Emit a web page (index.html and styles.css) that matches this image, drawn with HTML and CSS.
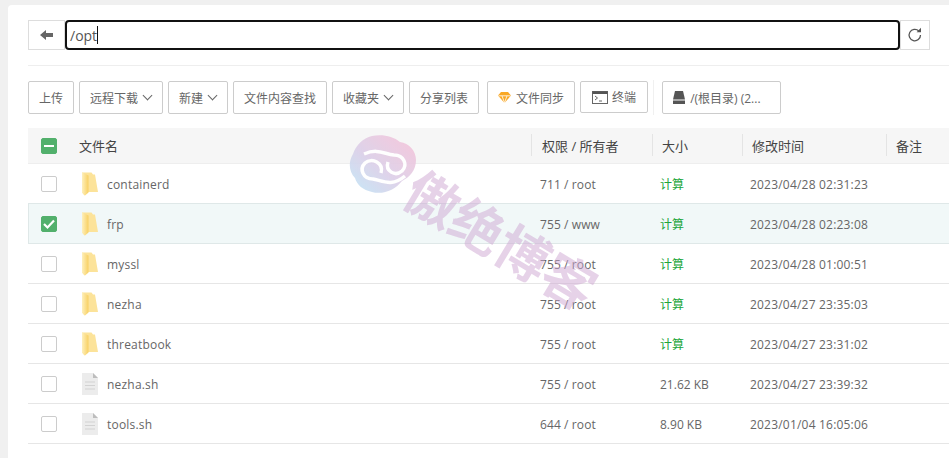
FILE: index.html
```html
<!DOCTYPE html>
<html lang="zh-CN">
<head>
  <meta charset="UTF-8">
  <title>文件管理</title>
  <link rel="stylesheet" href="styles.css">
</head>
<body>
  <svg width="0" height="0" class="defs">
    <defs>
      <linearGradient id="folderFill" x1="0" y1="0" x2="1" y2="0">
        <stop offset="0" stop-color="#fef0bd"/>
        <stop offset="1" stop-color="#f8d062"/>
      </linearGradient>
      <linearGradient id="cloudFill" x1="0" y1="1" x2="1" y2="0">
        <stop offset="0" stop-color="#bfe6f7"/>
        <stop offset="0.45" stop-color="#dccfe8"/>
        <stop offset="1" stop-color="#f8c2d8"/>
      </linearGradient>
      <symbol id="folder" viewBox="0 0 18 24">
        <path d="M1 0.500h9.500l1.500 2h2l3 17.500h-10l-3.500 3.500-2.500-3z" fill="#fce39a"/>
        <path d="M1 0.500l6.500 3v17l-3.500 3-3-3z" fill="url(#folderFill)"/>
      </symbol>
      <symbol id="file" viewBox="0 0 18 24">
        <path d="M1 1h11l5 5v17h-16z" fill="#ececec"/>
        <path d="M12 1l5 5h-5z" fill="#bdbdbd"/>
        <path d="M4 10h10M4 13.500h10M4 17h10" stroke="#d2d2d2" stroke-width="1"/>
      </symbol>
    </defs>
  </svg>

  <div class="panel">
    <div class="path-bar">
      <button class="path-btn back">
        <svg width="14" height="12" viewBox="0 0 14 12"><path d="M0 6l6-5v3h7v4h-7v3z" fill="#666"/></svg>
      </button>
      <div class="path-input">/opt<span class="caret"></span></div>
      <button class="path-btn refresh">
        <svg width="16" height="16" viewBox="0 0 16 16"><path d="M13.500 8a5.700 5.700 0 1 1-1.700-4" fill="none" stroke="#555" stroke-width="1.300"/><path d="M14 0.800v4.400h-4.400z" fill="#555"/></svg>
      </button>
    </div>

    <div class="toolbar">
      <button class="btn">上传</button>
      <button class="btn">远程下载<i class="arrow"></i></button>
      <button class="btn">新建<i class="arrow"></i></button>
      <button class="btn">文件内容查找</button>
      <button class="btn">收藏夹<i class="arrow"></i></button>
      <button class="btn">分享列表</button>
      <button class="btn sync">
        <svg width="13" height="11" viewBox="0 0 13 11"><path d="M3 0h7l3 3.500-6.500 7.500-6.500-7.500z" fill="#f9a825"/><path d="M0.500 3.800h12M4 3.800l2.500 7 2.500-7" stroke="#fff" stroke-width="0.800" fill="none"/></svg>
        文件同步
      </button>
      <button class="btn term">
        <svg width="16" height="13" viewBox="0 0 16 13"><rect x="0.500" y="0.500" width="15" height="12" fill="#fff" stroke="#666"/><rect x="0.500" y="0.500" width="15" height="2.500" fill="#555"/><path d="M3 5l2.500 2-2.500 2M7 10h3" stroke="#666" fill="none"/></svg>
        终端
      </button>
      <span class="tool-sep"></span>
      <button class="btn disk">
        <svg width="12" height="13" viewBox="0 0 12 13"><path d="M2 0h8l2 8.500h-12z" fill="#555"/><rect y="9.500" width="12" height="3.500" fill="#555"/></svg>
        /(根目录) (2...
      </button>
    </div>

    <div class="file-table">
      <div class="row head">
        <div class="cell-check"><span class="check partial"><i></i></span></div>
        <div class="cell-name">文件名</div>
        <div class="cell-perm">权限 / 所有者</div>
        <div class="cell-size">大小</div>
        <div class="cell-time">修改时间</div>
        <div class="cell-note">备注</div>
      </div>

      <div class="row">
        <div class="cell-check"><span class="check"></span></div>
        <div class="cell-name"><svg class="ficon"><use href="#folder"/></svg>containerd</div>
        <div class="cell-perm">711 / root</div>
        <div class="cell-size calc">计算</div>
        <div class="cell-time">2023/04/28 02:31:23</div>
        <div class="cell-note"></div>
      </div>
      <div class="row selected">
        <div class="cell-check"><span class="check on"><svg width="14" height="12" viewBox="0 0 14 12"><path d="M2 6l3.500 3.500 6.500-7" fill="none" stroke="#fff" stroke-width="2.200"/></svg></span></div>
        <div class="cell-name"><svg class="ficon"><use href="#folder"/></svg>frp</div>
        <div class="cell-perm">755 / www</div>
        <div class="cell-size calc">计算</div>
        <div class="cell-time">2023/04/28 02:23:08</div>
        <div class="cell-note"></div>
      </div>
      <div class="row">
        <div class="cell-check"><span class="check"></span></div>
        <div class="cell-name"><svg class="ficon"><use href="#folder"/></svg>myssl</div>
        <div class="cell-perm">755 / root</div>
        <div class="cell-size calc">计算</div>
        <div class="cell-time">2023/04/28 01:00:51</div>
        <div class="cell-note"></div>
      </div>
      <div class="row">
        <div class="cell-check"><span class="check"></span></div>
        <div class="cell-name"><svg class="ficon"><use href="#folder"/></svg>nezha</div>
        <div class="cell-perm">755 / root</div>
        <div class="cell-size calc">计算</div>
        <div class="cell-time">2023/04/27 23:35:03</div>
        <div class="cell-note"></div>
      </div>
      <div class="row">
        <div class="cell-check"><span class="check"></span></div>
        <div class="cell-name"><svg class="ficon"><use href="#folder"/></svg>threatbook</div>
        <div class="cell-perm">755 / root</div>
        <div class="cell-size calc">计算</div>
        <div class="cell-time">2023/04/27 23:31:02</div>
        <div class="cell-note"></div>
      </div>
      <div class="row">
        <div class="cell-check"><span class="check"></span></div>
        <div class="cell-name"><svg class="ficon"><use href="#file"/></svg>nezha.sh</div>
        <div class="cell-perm">755 / root</div>
        <div class="cell-size">21.62 KB</div>
        <div class="cell-time">2023/04/27 23:39:32</div>
        <div class="cell-note"></div>
      </div>
      <div class="row">
        <div class="cell-check"><span class="check"></span></div>
        <div class="cell-name"><svg class="ficon"><use href="#file"/></svg>tools.sh</div>
        <div class="cell-perm">644 / root</div>
        <div class="cell-size">8.90 KB</div>
        <div class="cell-time">2023/01/04 16:05:06</div>
        <div class="cell-note"></div>
      </div>
    </div>
  </div>

  <!-- watermark lies over the table -->
  <div class="watermark">
    <svg class="wm-logo" width="70" height="60" viewBox="0 0 70 60">
      <path d="M24 1c10-2 21 0 28 6 9 1 16 9 16 18 0 10-6 17-14 21-7 9-19 14-30 11-9-2-15-7-17-14-6-6-7-16-2-24 3-9 10-16 19-18z" fill="url(#cloudFill)"/>
      <path d="M33 38c3-10-9-16-16-10-6 6-2 16 8 16 10 2 19 8 32-3" fill="none" stroke="#fff" stroke-width="3.500"/>
      <path d="M40 27c-3 9 7 15 14 9 6-6 2-16-8-16-10-1-16-7-30-1" fill="none" stroke="#fff" stroke-width="3.500"/>
    </svg>
    <div class="wm-text">傲绝博客</div>
  </div>
</body>
</html>
```

FILE: styles.css
```css
* {
  box-sizing: border-box;
}
body {
  margin: 0;
  height: 458px;
  overflow: hidden;
  background: #f0f0f0;
  color: #666;
  font-family: "Open Sans", "Noto Sans CJK SC", sans-serif;
  font-size: 12px;
  position: relative;
}
.defs {
  position: absolute;
}
button {
  font-family: inherit;
  color: inherit;
}
.panel {
  margin: 5px 0 0 8px;
  height: 453px;
  padding: 15px 0 0 20px;
  background: #fff;
  border-radius: 4px 0 0 0;
}

/* path bar */
.path-bar {
  display: flex;
  width: 902px;
  height: 30px;
}
.path-btn {
  background: #fff;
  border: 1px solid #ddd;
  padding: 0;
  display: flex;
  align-items: center;
  justify-content: center;
}
.back {
  width: 37px;
}
.refresh {
  width: 30px;
}
.path-input {
  flex: 1;
  display: flex;
  align-items: center;
  border: 2px solid #111;
  border-radius: 4px;
  padding-left: 3px;
  font-size: 14px;
  color: #555;
}
.caret {
  width: 1px;
  height: 18px;
  background: #111;
}

/* toolbar */
.toolbar {
  display: flex;
  align-items: flex-start;
  gap: 5px;
  margin-top: 15px;
  padding-top: 15px;
  border-top: 1px solid #eee;
  height: 63px;
}
.btn {
  height: 33px;
  padding: 0 10px;
  background: #fff;
  border: 1px solid #ccc;
  border-radius: 2px;
  font-size: 12px;
  color: #666;
  display: flex;
  align-items: center;
  white-space: nowrap;
}
.btn svg {
  margin-right: 5px;
}
.arrow {
  width: 7px;
  height: 7px;
  margin: -4px 1px 0 6px;
  border-right: 1px solid #666;
  border-bottom: 1px solid #666;
  transform: rotate(45deg);
}
.sync {
  margin-left: 3px;
}
.term {
  padding: 0 11px;
  height: 32px;
}
.term svg {
  margin-right: 4px;
}
.tool-sep {
  width: 1px;
  height: 35px;
  margin: -1px 3px 0 0;
  background: #f0f0f0;
}
.disk {
  width: 119px;
}

/* file table */
.file-table {
  width: 921px;
}
.row {
  display: grid;
  grid-template-columns: 51px 452px 121px 90px 144px 63px;
  align-items: center;
  height: 40px;
  border-bottom: 1px solid #e6e6e6;
  font-size: 12px;
}
.row.head {
  height: 36px;
  background: #f6f6f6;
  border-bottom: 1px solid #eee;
  color: #444;
  font-size: 13px;
}
.row.selected {
  background: #f1f8f8;
  border-color: #dfe8e8;
  box-shadow: inset 1px 0 0 #dfe8e8, 0 -1px 0 #dfe8e8;
}
.head > div {
  position: relative;
}
.head .cell-perm::before,
.head .cell-size::before,
.head .cell-time::before,
.head .cell-note::before {
  content: "";
  position: absolute;
  left: 0;
  top: -2px;
  height: 22px;
  width: 1px;
  background: #e4e4e4;
}
.cell-check {
  padding-left: 13px;
  display: flex;
}
.cell-name {
  display: flex;
  align-items: center;
  letter-spacing: 0.200px;
  padding-top: 1px;
}
.cell-perm {
  padding: 1px 0 0 9px;
  letter-spacing: 0.100px;
}
.cell-size {
  padding: 1px 0 0 8px;
}
.cell-time {
  padding: 1px 0 0 8px;
  letter-spacing: 0.200px;
}
.row.head .cell-name,
.row.head .cell-perm,
.row.head .cell-size,
.row.head .cell-time {
  padding-top: 0;
  letter-spacing: 0;
}
.row.head .cell-perm {
  padding-left: 11px;
}
.row.head .cell-size,
.row.head .cell-time,
.row.head .cell-note {
  padding-left: 10px;
}
.calc {
  padding-top: 0;
  color: #20a53a;
}
.ficon {
  width: 18px;
  height: 24px;
  margin: 0 8px 0 2px;
  flex: none;
}
.check {
  width: 16px;
  height: 16px;
  border: 1px solid #ccc;
  border-radius: 2px;
  background: #fff;
  display: flex;
  align-items: center;
  justify-content: center;
}
.check.on,
.check.partial {
  background: #52b06c;
  border-color: #52b06c;
}
.check.partial i {
  width: 10px;
  height: 2px;
  background: #fff;
}

/* watermark */
.watermark {
  position: absolute;
  left: 347px;
  top: 135px;
  width: 270px;
  height: 190px;
  pointer-events: none;
}
.wm-logo {
  position: absolute;
  left: 1px;
  top: 0;
  opacity: 0.9;
}
.wm-text {
  position: absolute;
  left: 64px;
  top: 22px;
  white-space: nowrap;
  font-family: "Noto Sans CJK SC", sans-serif;
  font-size: 53px;
  font-weight: 700;
  line-height: 1;
  color: rgba(205, 165, 210, 0.5);
  transform: rotate(31deg);
  transform-origin: 0 50%;
}
```
